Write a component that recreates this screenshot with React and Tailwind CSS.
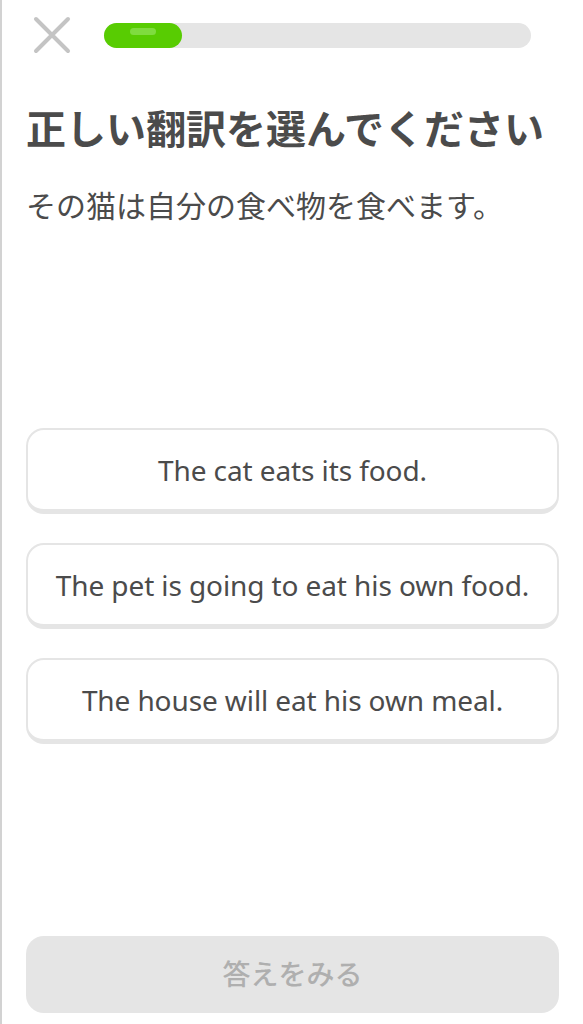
import React from "react";

const options = [
  "The cat eats its food.",
  "The pet is going to eat his own food.",
  "The house will eat his own meal.",
];

export default function App() {
  return (
    <div
      className="flex h-[1024px] w-full flex-col border-l-2 border-[#d2d2d2] bg-white"
      style={{ fontFamily: '"Noto Sans", "Noto Sans CJK JP", sans-serif' }}
    >
      {/* header */}
      <div className="flex items-center pt-4 pl-[31px] pr-[52px]">
        <svg width="38" height="38" viewBox="0 0 38 38" className="shrink-0">
          <path
            d="M3 3 L35 35 M35 3 L3 35"
            stroke="#c4c4c4"
            strokeWidth="4"
            strokeLinecap="round"
            fill="none"
          />
        </svg>
        <div className="relative ml-[33px] h-[25px] flex-1 rounded-full bg-[#e5e5e5]">
          <div className="relative h-full w-[78px] rounded-full bg-[#58cc02]">
            <div className="absolute left-[26px] top-[5px] h-[7px] w-[26px] rounded-full bg-[#7fdc3f]" />
          </div>
        </div>
      </div>

      {/* prompt */}
      <div className="px-[24px]">
        <h1
          className="mt-[49px] text-[40px] font-bold leading-[48px] text-[#4b4b4b] whitespace-nowrap"
          style={{ fontFamily: '"Noto Sans CJK JP", sans-serif' }}
        >
          正しい翻訳を選んでください
        </h1>
        <p
          className="mt-[33px] text-[30px] leading-[40px] text-[#4b4b4b] whitespace-nowrap"
          style={{ fontFamily: '"Noto Sans CJK JP", sans-serif' }}
        >
          その猫は自分の食べ物を食べます。
        </p>
      </div>

      {/* options */}
      <div className="mt-[204px] flex flex-col gap-[29px] px-[24px]">
        {options.map((o) => (
          <div
            key={o}
            className="flex h-[86px] items-center justify-center rounded-[18px] border-2 border-b-[5px] border-[#e5e5e5] bg-white text-[28px] tracking-[-0.1px] text-[#4b4b4b] whitespace-nowrap"
          >
            {o}
          </div>
        ))}
      </div>

      {/* check button */}
      <div className="mt-auto px-[24px] pb-[11px]">
        <div
          className="flex h-[77px] items-center justify-center rounded-[18px] bg-[#e5e5e5] pb-[4px] text-[28px] font-medium text-[#afafaf]"
          style={{ fontFamily: '"Noto Sans CJK JP", sans-serif' }}
        >
          答えをみる
        </div>
      </div>
    </div>
  );
}
